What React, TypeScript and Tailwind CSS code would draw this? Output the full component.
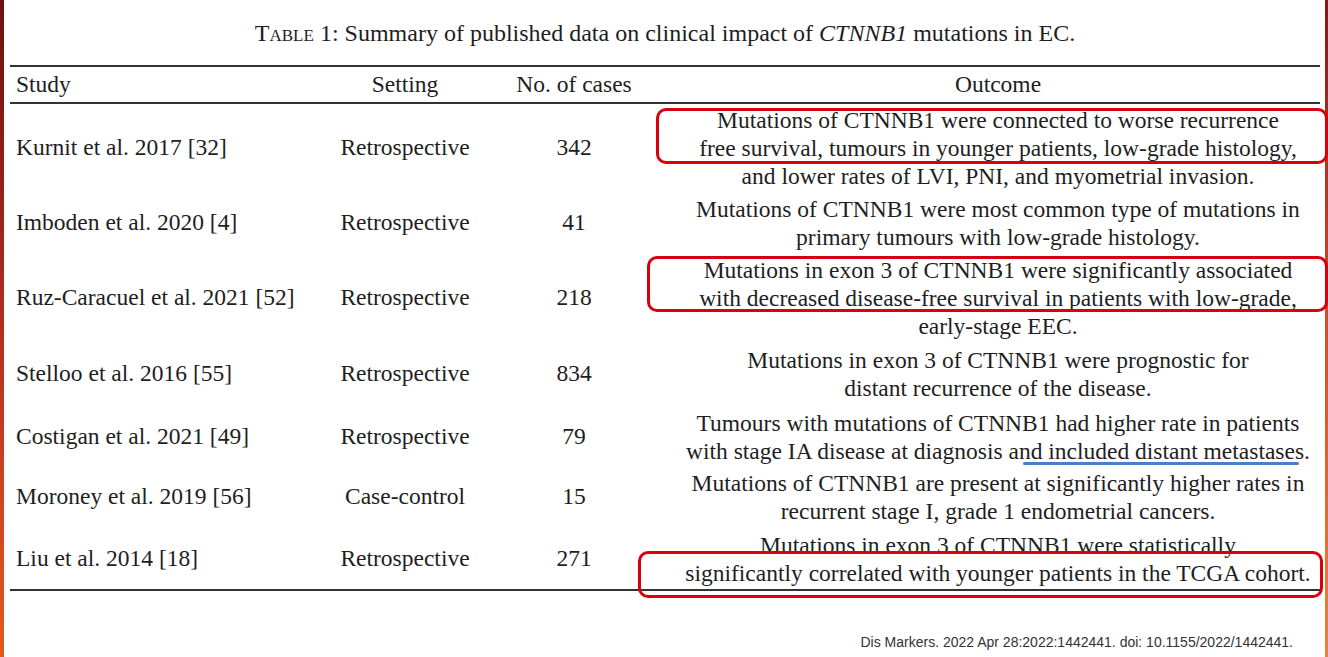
const rows: { study: string; setting: string; cases: string; outcome: string[]; pt: string }[] = [
  {
    study: "Kurnit et al. 2017 [32]",
    setting: "Retrospective",
    cases: "342",
    outcome: [
      "Mutations of CTNNB1 were connected to worse recurrence",
      "free survival, tumours in younger patients, low-grade histology,",
      "and lower rates of LVI, PNI, and myometrial invasion.",
    ],
    pt: "pt-[2px]",
  },
  {
    study: "Imboden et al. 2020 [4]",
    setting: "Retrospective",
    cases: "41",
    outcome: ["Mutations of CTNNB1 were most common type of mutations in", "primary tumours with low-grade histology."],
    pt: "pt-[5px]",
  },
  {
    study: "Ruz-Caracuel et al. 2021 [52]",
    setting: "Retrospective",
    cases: "218",
    outcome: [
      "Mutations in exon 3 of CTNNB1 were significantly associated",
      "with decreased disease-free survival in patients with low-grade,",
      "early-stage EEC.",
    ],
    pt: "pt-[5px]",
  },
  {
    study: "Stelloo et al. 2016 [55]",
    setting: "Retrospective",
    cases: "834",
    outcome: ["Mutations in exon 3 of CTNNB1 were prognostic for", "distant recurrence of the disease."],
    pt: "pt-[6px]",
  },
  {
    study: "Costigan et al. 2021 [49]",
    setting: "Retrospective",
    cases: "79",
    outcome: [
      "Tumours with mutations of CTNNB1 had higher rate in patients",
      "with stage IA disease at diagnosis and included distant metastases.",
    ],
    pt: "pt-[7px]",
  },
  {
    study: "Moroney et al. 2019 [56]",
    setting: "Case-control",
    cases: "15",
    outcome: ["Mutations of CTNNB1 are present at significantly higher rates in", "recurrent stage I, grade 1 endometrial cancers."],
    pt: "pt-[4px]",
  },
  {
    study: "Liu et al. 2014 [18]",
    setting: "Retrospective",
    cases: "271",
    outcome: ["Mutations in exon 3 of CTNNB1 were statistically", "significantly correlated with younger patients in the TCGA cohort."],
    pt: "pt-[6px]",
  },
];

const cols = "grid grid-cols-[322px_146px_192px_1fr]";

export default function App() {
  return (
    <div className="relative flex h-[657px] w-[1328px] overflow-hidden bg-white">
      {/* slide edges */}
      <div className="w-[4px] shrink-0 bg-gradient-to-b from-[#6e1010] via-[#b52e20] to-[#e55a1c]" />

      <main className="flex-1 pl-[6px] pr-[5px] font-['Liberation_Serif',serif] text-[23.5px] leading-[28px] text-[#1e1e1e]">
        <p className="pt-[19px] text-center text-[24px]">
          <span className="[font-variant:small-caps]">Table</span> 1: Summary of published data on clinical impact of{" "}
          <i>CTNNB1</i> mutations in EC.
        </p>

        <div className="mt-[18px] border-t-2 border-[#333]" />
        <div className={`${cols} pt-[3px] pb-[4px]`}>
          <div className="pl-[6px]">Study</div>
          <div className="text-center">Setting</div>
          <div className="text-center">No. of cases</div>
          <div className="pl-[6px] text-center">Outcome</div>
        </div>
        <div className="border-t-2 border-[#333]" />

        <div className="pb-[2px]">
          {rows.map((row) => (
            <div key={row.study} className={`${cols} items-center ${row.pt}`}>
              <div className="pl-[6px] -translate-y-[1px]">{row.study}</div>
              <div className="text-center -translate-y-[1px]">{row.setting}</div>
              <div className="text-center -translate-y-[1px]">{row.cases}</div>
              <div className="pl-[6px] text-center">
                {row.outcome.map((line) => (
                  <div key={line} className="whitespace-nowrap">
                    {line}
                  </div>
                ))}
              </div>
            </div>
          ))}
        </div>
        <div className="border-t-2 border-[#333]" />

        <p className="mt-[43px] pr-[27px] text-right font-['Liberation_Sans',Arial,sans-serif] text-[14px] leading-[16px] text-[#333]">
          Dis Markers. 2022 Apr 28:2022:1442441. doi: 10.1155/2022/1442441.
        </p>
      </main>

      <div className="w-[3px] shrink-0 bg-gradient-to-b from-[#8a1414] via-[#d0502a] to-[#e8823a]" />

      {/* annotations */}
      <div className="absolute left-[656px] top-[108px] h-[56px] w-[672px] rounded-[10px] border-[3px] border-[#d8000f]" />
      <div className="absolute left-[647px] top-[256px] h-[56px] w-[681px] rounded-[10px] border-[3px] border-[#d8000f]" />
      <div className="absolute left-[638px] top-[551px] h-[47px] w-[685px] rounded-[10px] border-[3px] border-[#d8000f]" />
      <div className="absolute left-[1023px] top-[462px] h-[3px] w-[276px] rounded-full bg-[#4a80c2]" />
    </div>
  );
}
